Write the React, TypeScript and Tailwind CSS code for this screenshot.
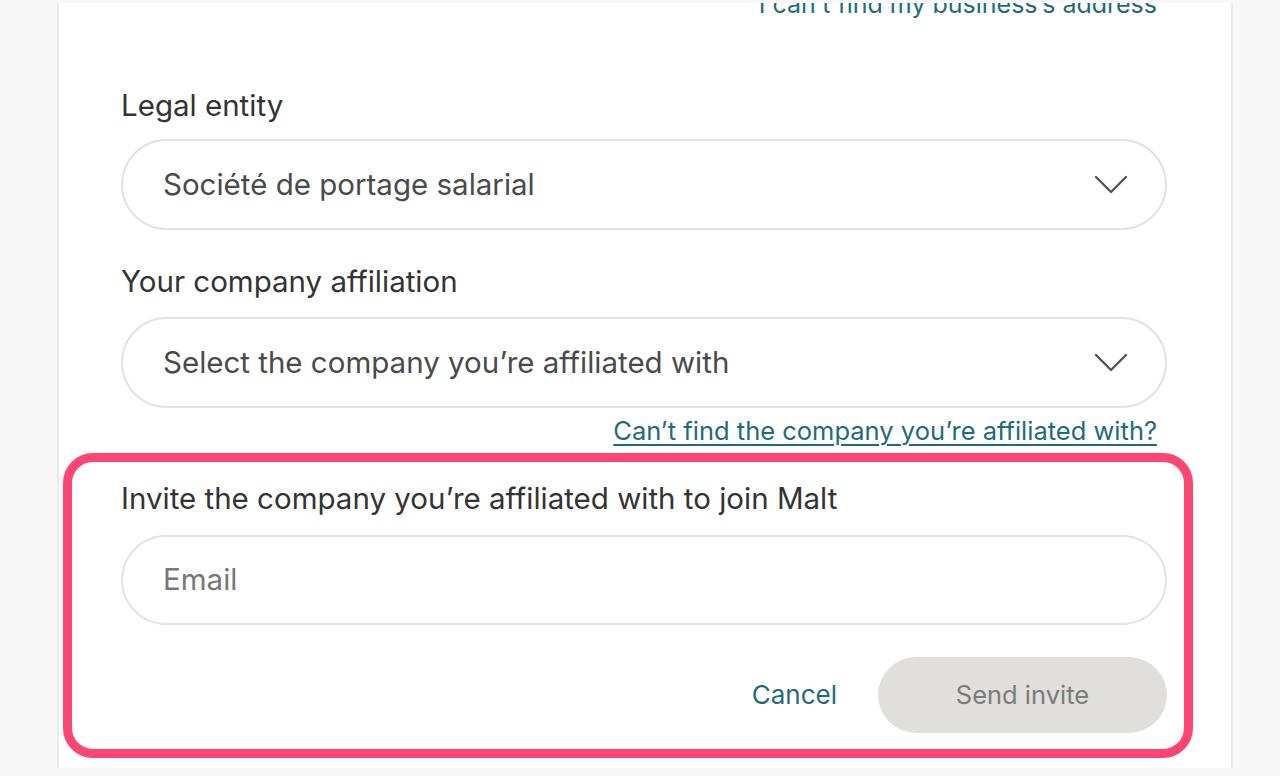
import React from "react";

function Chevron() {
  return (
    <svg width="34" height="20" viewBox="0 0 34 20" fill="none" className="shrink-0">
      <path d="M2 2 L17 17 L32 2" stroke="#555555" strokeWidth="2.4" strokeLinecap="round" strokeLinejoin="round" />
    </svg>
  );
}

function SelectBox({ text }: { text: string }) {
  return (
    <div className="h-[91px] rounded-full border-2 border-[#e4e3df] bg-white flex items-center justify-between pl-[40px] pr-[37px]">
      <span className="text-[29.5px] text-[#4a4a4a] leading-none">{text}</span>
      <Chevron />
    </div>
  );
}

export default function App() {
  return (
    <div
      className="min-h-[776px] bg-[#f7f7f7] pt-[3px]"
      style={{ fontFamily: "Inter, 'Noto Sans', sans-serif" }}
    >
      <div className="ml-[57px] w-[1176px] h-[765px] bg-white border-x-2 border-[#ebebe8] overflow-hidden pl-[62px] pr-[64px]">
        <div className="-mt-[14px] h-[30px] flex justify-end pr-[10px]">
          <span className="text-[25px] leading-[30px] text-[#1f6b7b]">I can’t find my business’s address</span>
        </div>

        <div className="mt-[69px] text-[29.5px] leading-[34px] text-[#333333]">Legal entity</div>
        <div className="mt-[17px]">
          <SelectBox text="Société de portage salarial" />
        </div>

        <div className="mt-[34px] text-[29.5px] leading-[34px] text-[#333333]">Your company affiliation</div>
        <div className="mt-[19px]">
          <SelectBox text="Select the company you’re affiliated with" />
        </div>

        <div className="mt-[8px] flex justify-end pr-[10px]">
          <a className="text-[25.5px] leading-[30px] text-[#1f6b7b] underline underline-offset-[4px] decoration-[1.5px]">
            Can’t find the company you’re affiliated with?
          </a>
        </div>

        <div className="mt-[7px] -ml-[58px] -mr-[26px] h-[305px] border-[9px] border-[#ff4673] rounded-[30px] pl-[49px] pr-[17px] pt-[19px] pb-[15px]">
          <div className="text-[29.5px] leading-[34px] text-[#333333]">
            Invite the company you’re affiliated with to join Malt
          </div>
          <div className="mt-[20px] h-[90px] rounded-full border-2 border-[#e4e3df] flex items-center pl-[40px]">
            <span className="text-[29.5px] text-[#777777] leading-none">Email</span>
          </div>
          <div className="mt-[32px] flex items-center justify-end">
            <button className="text-[26px] text-[#1f6b7b] leading-none">Cancel</button>
            <button className="ml-[41px] w-[289px] h-[76px] rounded-full bg-[#e0dfdb] text-[25.5px] text-[#7b7b7b] leading-none">
              Send invite
            </button>
          </div>
        </div>
      </div>
    </div>
  );
}
